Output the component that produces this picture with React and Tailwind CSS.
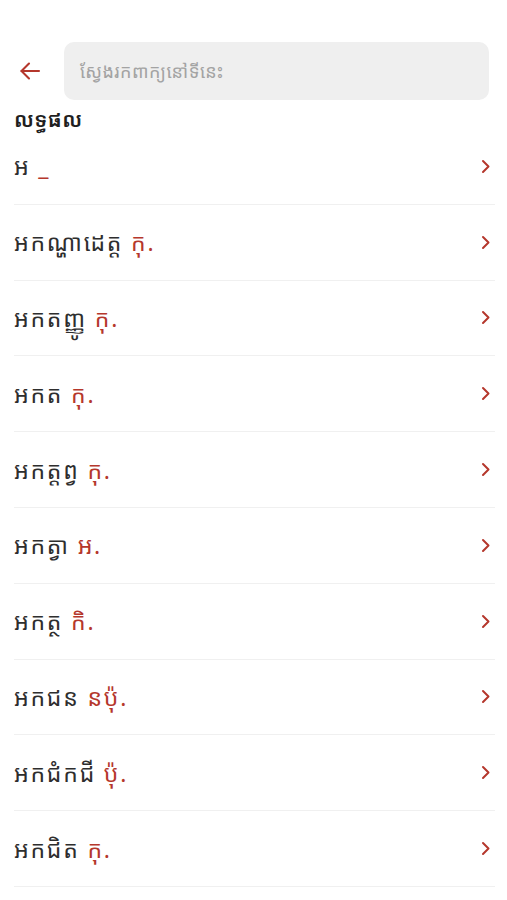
import React from 'react';

const words = [
  { word: 'អ', pos: '_' },
  { word: 'អកណ្ហាដេត្ត', pos: 'កុ.' },
  { word: 'អកតញ្ញូ', pos: 'កុ.' },
  { word: 'អកត', pos: 'កុ.' },
  { word: 'អកត្តព្វ', pos: 'កុ.' },
  { word: 'អកត្វា', pos: 'អ.' },
  { word: 'អកត្ថ', pos: 'កិ.' },
  { word: 'អកជន', pos: 'នប៉ុ.' },
  { word: 'អកជំកជី', pos: 'ប៉ុ.' },
  { word: 'អកជិត', pos: 'កុ.' },
];

function BackArrow() {
  return (
    <svg width="24" height="24" viewBox="0 0 24 24" fill="none" stroke="#b5372c" strokeWidth="2.1" strokeLinecap="round" strokeLinejoin="round">
      <path d="M21 12H3.5" />
      <path d="M11 4.5L3.5 12l7.5 7.5" />
    </svg>
  );
}

function Chevron() {
  return (
    <svg width="9" height="15" viewBox="0 0 9 15" fill="none" stroke="#b5372c" strokeWidth="2" strokeLinecap="round" strokeLinejoin="round">
      <path d="M2 2l5.5 5.5L2 13" />
    </svg>
  );
}

export default function App() {
  return (
    <div className="min-h-[900px] bg-white font-['Khmer_OS','Noto_Sans_Khmer','Noto_Sans',sans-serif]">
      <div className="flex items-center pt-[42px] pl-[18px] pr-[18px]">
        <button className="flex h-[24px] w-[24px] items-center justify-center">
          <BackArrow />
        </button>
        <div className="ml-[22px] flex h-[58px] flex-1 items-center rounded-[10px] bg-[#efefef] px-[16px]">
          <span className="text-[18px] tracking-[0.5px] text-[#a3a3a3]">ស្វែងរកពាក្យនៅទីនេះ</span>
        </div>
      </div>

      <h2 className="mt-[10px] px-[14px] text-[21px] font-semibold leading-[19px] tracking-[0.3px] text-[#1f1f1f]">លទ្ធផល</h2>

      <ul className="mr-[12px] ml-[14px]">
        {words.map((w, i) => (
          <li
            key={i}
            className="flex h-[75.8px] items-center justify-between border-b border-[#f0f0f0] pr-[5px]"
          >
            <span className="text-[23px] leading-[30px] tracking-[1.8px] text-[#2e2e2e]">
              {w.word} <span className="text-[#b5372c]">{w.pos}</span>
            </span>
            <Chevron />
          </li>
        ))}
      </ul>
    </div>
  );
}
